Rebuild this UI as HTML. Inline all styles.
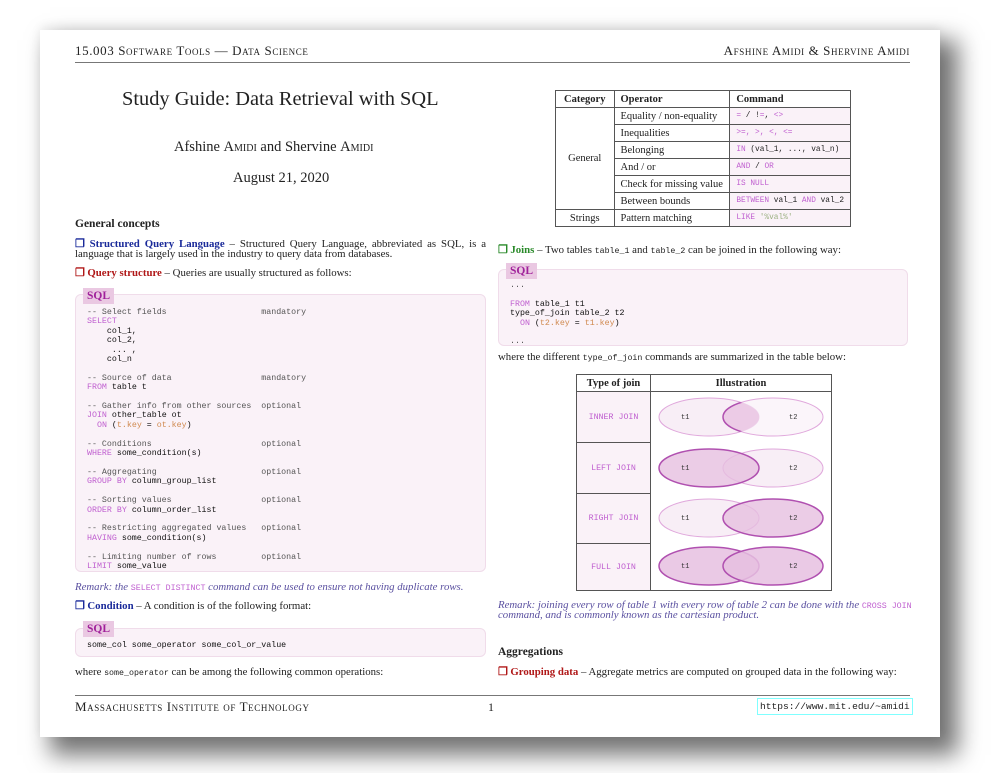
<!DOCTYPE html>
<html><head><meta charset="utf-8"><style>
*{margin:0;padding:0;box-sizing:border-box}
body{width:1000px;height:773px;background:#fff;position:relative;overflow:hidden;font-family:"Liberation Serif",serif;color:#222}
.paper{position:absolute;left:40px;top:30px;width:900px;height:707px;background:#fff;box-shadow:14px 14px 22px 4px rgba(0,0,0,0.55),0 -4px 10px rgba(0,0,0,0.06)}
.a{position:absolute;white-space:nowrap}
.t{font-size:10.8px;line-height:11px}
.sc{font-variant:small-caps;font-size:13px;letter-spacing:0.6px}
.m{font-family:"Liberation Mono",monospace;font-size:8.3px;letter-spacing:0}
.k{color:#c060d0}
.o{color:#d08a50}
.cm{color:#555}
.code{position:absolute;background:#faf2f8;border:1px solid #f0dcea;border-radius:6px}
.lbl{position:absolute;background:#eac8e2;color:#a0209a;font-weight:bold;font-size:11.5px;padding:2px 4px;line-height:12px}
.pre{position:absolute;font-family:"Liberation Mono",monospace;font-size:8.3px;line-height:9.4px;white-space:pre;color:#111}
.bx{color:#1a2a9a;font-weight:bold}
.rd{color:#b01818;font-weight:bold}
.gr{color:#2a8a2a;font-weight:bold}
.rem{color:#5a50a0;font-style:italic}
table{border-collapse:collapse;position:absolute}
td,th{border:1px solid #555;font-size:10.5px;padding:0 6px;text-align:left;font-weight:normal;white-space:nowrap}
th{font-weight:bold}
td.m{font-size:7.8px}
.pk{background:#faf2f8}
.j{text-align:justify;text-align-last:justify;white-space:normal}
</style></head><body>
<div class="paper"></div>
<div class="a sc" style="left:75px;top:43px">15.003 Software Tools — Data Science</div>
<div class="a sc" style="right:90px;top:43px">Afshine Amidi &amp; Shervine Amidi</div>
<div class="a" style="left:75px;top:62px;width:835px;border-top:1px solid #777"></div>

<div class="a" style="left:122px;top:88px;font-size:20.4px">Study Guide: Data Retrieval with SQL</div>
<div class="a" style="left:174px;top:139px;font-size:14.5px">Afshine <span style="font-variant:small-caps">Amidi</span> and Shervine <span style="font-variant:small-caps">Amidi</span></div>
<div class="a" style="left:233px;top:170px;font-size:14.5px">August 21, 2020</div>

<div class="a" style="left:75px;top:218px;font-size:11.5px;font-weight:bold">General concepts</div>
<div class="a t j" style="left:75px;top:239px;width:411px"><span class="bx">❐ Structured Query Language</span> – Structured Query Language, abbreviated as SQL, is a</div>
<div class="a t" style="left:75px;top:249px">language that is largely used in the industry to query data from databases.</div>
<div class="a t" style="left:75px;top:268px"><span class="rd">❐ Query structure</span> – Queries are usually structured as follows:</div>

<div class="code" style="left:75px;top:294px;width:411px;height:278px"></div>
<div class="lbl" style="left:83px;top:288px">SQL</div>
<div class="pre" style="left:87px;top:308px"><span class="cm">-- Select fields                   mandatory</span>
<span class="k">SELECT</span>
    col_1,
    col_2,
     ... ,
    col_n

<span class="cm">-- Source of data                  mandatory</span>
<span class="k">FROM</span> table t

<span class="cm">-- Gather info from other sources  optional</span>
<span class="k">JOIN</span> other_table ot
  <span class="k">ON</span> (<span class="o">t.key</span> = <span class="o">ot.key</span>)

<span class="cm">-- Conditions                      optional</span>
<span class="k">WHERE</span> some_condition(s)

<span class="cm">-- Aggregating                     optional</span>
<span class="k">GROUP BY</span> column_group_list

<span class="cm">-- Sorting values                  optional</span>
<span class="k">ORDER BY</span> column_order_list

<span class="cm">-- Restricting aggregated values   optional</span>
<span class="k">HAVING</span> some_condition(s)

<span class="cm">-- Limiting number of rows         optional</span>
<span class="k">LIMIT</span> some_value</div>

<div class="a t rem" style="left:75px;top:582px">Remark: the <span class="m k" style="font-style:normal">SELECT DISTINCT</span> command can be used to ensure not having duplicate rows.</div>
<div class="a t" style="left:75px;top:601px"><span class="bx">❐ Condition</span> – A condition is of the following format:</div>
<div class="code" style="left:75px;top:628px;width:411px;height:29px"></div>
<div class="lbl" style="left:83px;top:621px">SQL</div>
<div class="pre" style="left:87px;top:641px">some_col some_operator some_col_or_value</div>
<div class="a t" style="left:75px;top:667px">where <span class="m">some_operator</span> can be among the following common operations:</div>

<div class="a" style="left:75px;top:695px;width:835px;border-top:1px solid #777"></div>
<div class="a sc" style="left:75px;top:699px">Massachusetts Institute of Technology</div>
<div class="a" style="left:488px;top:700px;font-size:12px">1</div>
<div class="a" style="left:757px;top:698px;border:1px solid #80ffff;padding:1px 2px;font-family:'Liberation Mono',monospace;font-size:9.6px;line-height:13px">https://www.mit.edu/~amidi</div>

<!-- right column -->
<table style="left:555px;top:90px;width:296px">
<tr style="height:17px"><th style="width:60px;text-align:center">Category</th><th style="width:116px">Operator</th><th>Command</th></tr>
<tr style="height:17px"><td rowspan="6" style="text-align:center">General</td><td>Equality / non-equality</td><td class="pk m"><span class="k">=</span> / !<span class="k">=</span>, <span class="k">&lt;&gt;</span></td></tr>
<tr style="height:17px"><td>Inequalities</td><td class="pk m k">&gt;=, &gt;, &lt;, &lt;=</td></tr>
<tr style="height:17px"><td>Belonging</td><td class="pk m"><span class="k">IN</span> (val_1, ..., val_n)</td></tr>
<tr style="height:17px"><td>And / or</td><td class="pk m"><span class="k">AND</span> / <span class="k">OR</span></td></tr>
<tr style="height:17px"><td>Check for missing value</td><td class="pk m k">IS NULL</td></tr>
<tr style="height:17px"><td>Between bounds</td><td class="pk m"><span class="k">BETWEEN</span> val_1 <span class="k">AND</span> val_2</td></tr>
<tr style="height:17px"><td style="text-align:center">Strings</td><td>Pattern matching</td><td class="pk m"><span class="k">LIKE</span> <span style="color:#9ab080">'%val%'</span></td></tr>
</table>

<div class="a t" style="left:498px;top:245px"><span class="gr">❐ Joins</span> – Two tables <span class="m">table_1</span> and <span class="m">table_2</span> can be joined in the following way:</div>
<div class="code" style="left:498px;top:269px;width:410px;height:77px"></div>
<div class="lbl" style="left:506px;top:263px">SQL</div>
<div class="pre" style="left:510px;top:281px"><span class="cm">...</span>

<span class="k">FROM</span> table_1 t1
type_of_join table_2 t2
  <span class="k">ON</span> (<span class="o">t2.key</span> = <span class="o">t1.key</span>)

<span class="cm">...</span></div>
<div class="a t" style="left:498px;top:352px">where the different <span class="m">type_of_join</span> commands are summarized in the table below:</div>

<table style="left:576px;top:374px;width:256px">
<tr style="height:17px"><th style="width:74px;text-align:center">Type of join</th><th style="text-align:center">Illustration</th></tr>
<tr style="height:51px"><td class="pk m k" style="text-align:center;font-size:8.3px">INNER JOIN</td><td rowspan="4" style="padding:0"></td></tr>
<tr style="height:51px"><td class="pk m k" style="text-align:center;font-size:8.3px">LEFT JOIN</td></tr>
<tr style="height:50px"><td class="pk m k" style="text-align:center;font-size:8.3px">RIGHT JOIN</td></tr>
<tr style="height:47px"><td class="pk m k" style="text-align:center;font-size:8.3px">FULL JOIN</td></tr>
</table>
<svg class="a" style="left:651px;top:392px" width="180" height="198" viewBox="0 0 180 198">
<defs>
<clipPath id="c1"><ellipse cx="58" cy="25" rx="50" ry="19"/></clipPath>
</defs>
<g font-family="Liberation Mono" font-size="7" fill="#333">
<ellipse cx="58" cy="25" rx="50" ry="19" fill="#f8eef6" stroke="#e0a8dc" stroke-width="1"/>
<ellipse cx="122" cy="25" rx="50" ry="19" fill="#f8eef6" fill-opacity="0.6" stroke="#e0a8dc" stroke-width="1"/>
<ellipse cx="122" cy="25" rx="50" ry="19" clip-path="url(#c1)" fill="#eccbe6" stroke="#b050b0" stroke-width="1.5"/>
<text x="30" y="27">t1</text><text x="138" y="27">t2</text>
<ellipse cx="122" cy="76" rx="50" ry="19" fill="#f8eef6" stroke="#e0a8dc" stroke-width="1"/>
<ellipse cx="58" cy="76" rx="50" ry="19" fill="#e6bfe0" fill-opacity="0.8" stroke="#b050b0" stroke-width="1.5"/>
<text x="30" y="78">t1</text><text x="138" y="78">t2</text>
<ellipse cx="58" cy="126" rx="50" ry="19" fill="#f8eef6" stroke="#e0a8dc" stroke-width="1"/>
<ellipse cx="122" cy="126" rx="50" ry="19" fill="#e6bfe0" fill-opacity="0.8" stroke="#b050b0" stroke-width="1.5"/>
<text x="30" y="128">t1</text><text x="138" y="128">t2</text>
<ellipse cx="58" cy="174" rx="50" ry="19" fill="#e6bfe0" fill-opacity="0.85" stroke="#b050b0" stroke-width="1.5"/>
<ellipse cx="122" cy="174" rx="50" ry="19" fill="#e6bfe0" fill-opacity="0.85" stroke="#b050b0" stroke-width="1.5"/>
<text x="30" y="176">t1</text><text x="138" y="176">t2</text>
</g></svg>

<div class="a t rem" style="left:498px;top:600px">Remark: joining every row of table 1 with every row of table 2 can be done with the <span class="m k" style="font-style:normal">CROSS JOIN</span></div>
<div class="a t rem" style="left:498px;top:610px">command, and is commonly known as the cartesian product.</div>
<div class="a" style="left:498px;top:646px;font-size:11.5px;font-weight:bold">Aggregations</div>
<div class="a t" style="left:498px;top:667px"><span class="rd">❐ Grouping data</span> – Aggregate metrics are computed on grouped data in the following way:</div>
</body></html>
